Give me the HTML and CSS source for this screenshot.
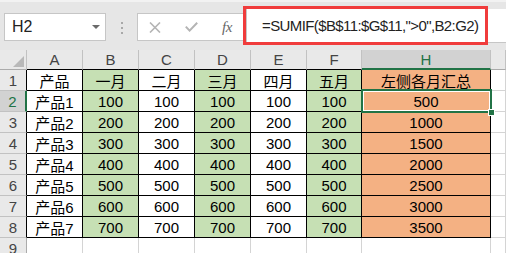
FILE: index.html
```html
<!DOCTYPE html>
<html lang="zh-CN">
<head>
    <meta charset="UTF-8">
    <title>SUMIF</title>
    <link rel="stylesheet" href="styles.css">
</head>
<body>
    <div class="toolbar">
        <div class="namebox"><span class="ref">H2</span><span class="caret"></span></div>
        <div class="grip"><i></i><i></i><i></i></div>
        <div class="fxbtns">
            <svg width="12" height="11" viewBox="0 0 12 11"><path d="M1 0.5 L11 10.5 M11 0.5 L1 10.5" stroke="#b4b4b4" stroke-width="1.6" fill="none"/></svg>
            <svg width="13" height="10" viewBox="0 0 13 10"><path d="M0.8 4.6 L4.6 8.6 L12.2 0.8" stroke="#b4b4b4" stroke-width="2" fill="none"/></svg>
            <span class="fx">fx</span>
        </div>
        <div class="formula">=SUMIF($B$11:$G$11,"&gt;0",B2:G2)</div>
        <div class="mark"></div>
    </div>

    <div class="sheet">
        <!-- column headers -->
        <div class="c hd corner"><span class="tri"></span></div>
        <div class="c hd in">A</div>
        <div class="c hd in">B</div>
        <div class="c hd in">C</div>
        <div class="c hd in">D</div>
        <div class="c hd in">E</div>
        <div class="c hd in">F</div>
        <div class="c hd in sel">H</div>
        <div class="c hd"></div>

        <div class="c rh in">1</div>
        <div class="c t">产品</div>
        <div class="c t g">一月</div>
        <div class="c t">二月</div>
        <div class="c t g">三月</div>
        <div class="c t">四月</div>
        <div class="c t g">五月</div>
        <div class="c t o">左侧各月汇总</div>
        <div class="c"></div>

        <div class="c rh in sel">2</div>
        <div class="c t">产品1</div>
        <div class="c t g">100</div>
        <div class="c t">100</div>
        <div class="c t g">100</div>
        <div class="c t">100</div>
        <div class="c t g">100</div>
        <div class="c t o cur">500</div>
        <div class="c"></div>

        <div class="c rh in">3</div>
        <div class="c t">产品2</div>
        <div class="c t g">200</div>
        <div class="c t">200</div>
        <div class="c t g">200</div>
        <div class="c t">200</div>
        <div class="c t g">200</div>
        <div class="c t o">1000</div>
        <div class="c"></div>

        <div class="c rh in">4</div>
        <div class="c t">产品3</div>
        <div class="c t g">300</div>
        <div class="c t">300</div>
        <div class="c t g">300</div>
        <div class="c t">300</div>
        <div class="c t g">300</div>
        <div class="c t o">1500</div>
        <div class="c"></div>

        <div class="c rh in">5</div>
        <div class="c t">产品4</div>
        <div class="c t g">400</div>
        <div class="c t">400</div>
        <div class="c t g">400</div>
        <div class="c t">400</div>
        <div class="c t g">400</div>
        <div class="c t o">2000</div>
        <div class="c"></div>

        <div class="c rh in">6</div>
        <div class="c t">产品5</div>
        <div class="c t g">500</div>
        <div class="c t">500</div>
        <div class="c t g">500</div>
        <div class="c t">500</div>
        <div class="c t g">500</div>
        <div class="c t o">2500</div>
        <div class="c"></div>

        <div class="c rh in">7</div>
        <div class="c t">产品6</div>
        <div class="c t g">600</div>
        <div class="c t">600</div>
        <div class="c t g">600</div>
        <div class="c t">600</div>
        <div class="c t g">600</div>
        <div class="c t o">3000</div>
        <div class="c"></div>

        <div class="c rh in">8</div>
        <div class="c t">产品7</div>
        <div class="c t g">700</div>
        <div class="c t">700</div>
        <div class="c t g">700</div>
        <div class="c t">700</div>
        <div class="c t g">700</div>
        <div class="c t o">3500</div>
        <div class="c"></div>

        <div class="c rh">9</div>
        <div class="c"></div>
        <div class="c"></div>
        <div class="c"></div>
        <div class="c"></div>
        <div class="c"></div>
        <div class="c"></div>
        <div class="c"></div>
        <div class="c"></div>
    </div>
</body>
</html>
```

FILE: styles.css
```css
body {
    margin: 0;
    width: 506px;
    height: 253px;
    overflow: hidden;
    background: #fff;
    font-family: "Liberation Sans", "Noto Sans CJK SC", sans-serif;
    color: #000;
}
.toolbar {
    position: relative;
    display: flex;
    align-items: flex-start;
    height: 50px;
    box-sizing: border-box;
    padding-top: 13px;
    background: #e6e6e6;
    border-top: 2px solid #f2f2f2;
}
.namebox {
    margin-top: -2px;
    margin-left: 4px;
    width: 102px;
    height: 28px;
    box-sizing: border-box;
    border: 1px solid #c6c6c6;
    background: #fff;
    display: flex;
    align-items: center;
    justify-content: space-between;
    padding: 0 5px 0 7px;
    font-size: 16px;
    color: #222;
}
.caret {
    width: 0;
    height: 0;
    border-left: 4px solid transparent;
    border-right: 4px solid transparent;
    border-top: 4px solid #6a6a6a;
}
.grip {
    margin-top: 7px;
    margin-left: 15px;
    display: flex;
    flex-direction: column;
    gap: 3px;
}
.grip i {
    display: block;
    width: 2px;
    height: 2px;
    background: #a8a8a8;
}
.fxbtns {
    margin-top: -2px;
    margin-left: 14px;
    width: 106px;
    height: 28px;
    box-sizing: border-box;
    border: 1px solid #c6c6c6;
    border-right: none;
    background: #fff;
    display: flex;
    align-items: center;
    gap: 24px;
    padding-left: 11px;
}
.fx {
    font-family: "Liberation Serif", serif;
    font-style: italic;
    font-size: 15px;
    color: #666;
    letter-spacing: -0.5px;
}
.formula {
    flex: 1;
    margin-top: -6px;
    margin-left: 3px;
    height: 34px;
    box-sizing: border-box;
    border-left: 1px solid #c6c6c6;
    border-bottom: 1px solid #c6c6c6;
    background: #fff;
    display: flex;
    align-items: center;
    padding-left: 15px;
    font-size: 15px;
    letter-spacing: -0.6px;
    color: #222;
}
.mark {
    position: absolute;
    left: 243px;
    top: 4px;
    width: 245px;
    height: 39px;
    box-sizing: border-box;
    border: 3px solid #f03c3c;
}
.sheet {
    display: grid;
    grid-template-columns: 27px 56px 56px 56px 56px 56px 55px 129px 1fr;
    grid-template-rows: 20px repeat(9, 21px);
}
.c {
    box-sizing: border-box;
    border-right: 1px solid #d4d4d4;
    border-bottom: 1px solid #d4d4d4;
    display: flex;
    align-items: center;
    justify-content: center;
    font-size: 15px;
    white-space: nowrap;
}
.hd {
    background: #e9e9e9;
    color: #444;
    border-right-color: #c2c2c2;
    border-bottom-color: #ababab;
}
.hd.in {
    border-bottom-color: #000;
}
.hd.sel {
    background: #d2d2d2;
    color: #217346;
    border-bottom: 2px solid #217346;
}
.corner {
    position: relative;
}
.tri {
    position: absolute;
    right: 2px;
    bottom: 2px;
    width: 0;
    height: 0;
    border-left: 11px solid transparent;
    border-bottom: 11px solid #b9b9b9;
}
.rh {
    background: #e9e9e9;
    color: #444;
    border-bottom-color: #c2c2c2;
    border-right-color: #ababab;
}
.rh.in {
    border-right-color: #000;
}
.rh.sel {
    background: #d2d2d2;
    color: #217346;
    border-right: 2px solid #217346;
}
.t {
    border-right-color: #000;
    border-bottom-color: #000;
}
.g {
    background: #c6e0b4;
}
.o {
    background: #f4b183;
}
.cur {
    position: relative;
    z-index: 1;
}
.cur::before {
    content: "";
    position: absolute;
    top: -2px;
    left: -1px;
    right: -2px;
    bottom: -2px;
    border: 2px solid #217346;
    box-shadow: inset 0 0 0 1px #fff;
}
.cur::after {
    content: "";
    position: absolute;
    right: -5px;
    bottom: -5px;
    width: 5px;
    height: 5px;
    background: #217346;
    border: 1px solid #fff;
}
```
